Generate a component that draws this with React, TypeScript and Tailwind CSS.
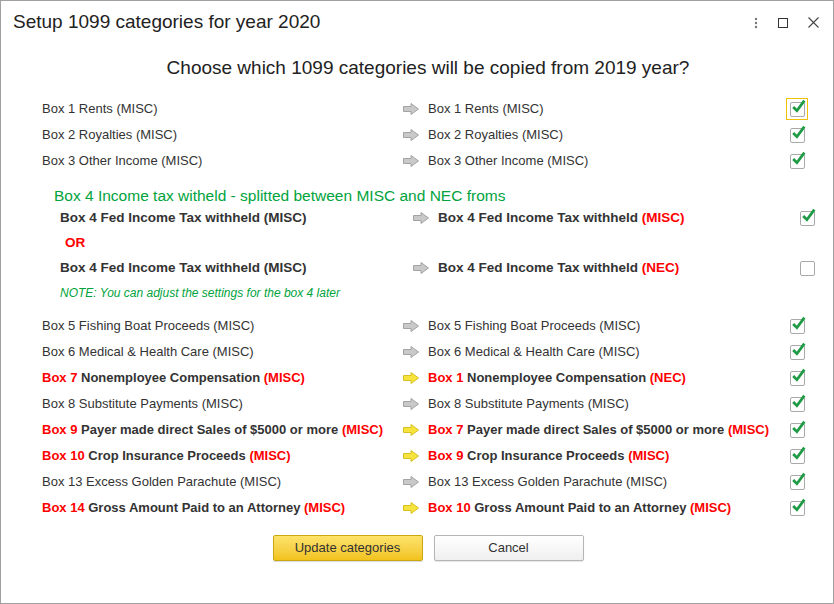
import React from "react";

type Part = { t: string; red?: boolean };
type Row = { left: Part[]; right: Part[]; bold?: boolean; yellow?: boolean; focus?: boolean };

const rowsTop: Row[] = [
  { left: [{ t: "Box 1 Rents (MISC)" }], right: [{ t: "Box 1 Rents (MISC)" }], focus: true },
  { left: [{ t: "Box 2 Royalties (MISC)" }], right: [{ t: "Box 2 Royalties (MISC)" }] },
  { left: [{ t: "Box 3 Other Income (MISC)" }], right: [{ t: "Box 3 Other Income (MISC)" }] },
];

const rowsBottom: Row[] = [
  { left: [{ t: "Box 5 Fishing Boat Proceeds (MISC)" }], right: [{ t: "Box 5 Fishing Boat Proceeds (MISC)" }] },
  { left: [{ t: "Box 6 Medical & Health Care (MISC)" }], right: [{ t: "Box 6 Medical & Health Care (MISC)" }] },
  {
    bold: true,
    yellow: true,
    left: [{ t: "Box 7", red: true }, { t: " Nonemployee Compensation " }, { t: "(MISC)", red: true }],
    right: [{ t: "Box 1", red: true }, { t: " Nonemployee Compensation " }, { t: "(NEC)", red: true }],
  },
  { left: [{ t: "Box 8 Substitute Payments (MISC)" }], right: [{ t: "Box 8 Substitute Payments (MISC)" }] },
  {
    bold: true,
    yellow: true,
    left: [{ t: "Box 9", red: true }, { t: " Payer made direct Sales of $5000 or more " }, { t: "(MISC)", red: true }],
    right: [{ t: "Box 7", red: true }, { t: " Payer made direct Sales of $5000 or more " }, { t: "(MISC)", red: true }],
  },
  {
    bold: true,
    yellow: true,
    left: [{ t: "Box 10", red: true }, { t: " Crop Insurance Proceeds " }, { t: "(MISC)", red: true }],
    right: [{ t: "Box 9", red: true }, { t: " Crop Insurance Proceeds " }, { t: "(MISC)", red: true }],
  },
  { left: [{ t: "Box 13 Excess Golden Parachute (MISC)" }], right: [{ t: "Box 13 Excess Golden Parachute (MISC)" }] },
  {
    bold: true,
    yellow: true,
    left: [{ t: "Box 14", red: true }, { t: " Gross Amount Paid to an Attorney " }, { t: "(MISC)", red: true }],
    right: [{ t: "Box 10", red: true }, { t: " Gross Amount Paid to an Attorney " }, { t: "(MISC)", red: true }],
  },
];

function Arrow({ yellow }: { yellow?: boolean }) {
  return (
    <svg width="18" height="14" viewBox="0 0 18 14">
      <path
        d="M1.5 4.5 H9 V1.5 L16.5 7 L9 12.5 V9.5 H1.5 Z"
        fill={yellow ? "#f6e33e" : "#c9c9c9"}
        stroke={yellow ? "#d8c020" : "#a3a3a3"}
        strokeWidth="1"
        strokeLinejoin="round"
      />
    </svg>
  );
}

function Check({ checked = true, focus }: { checked?: boolean; focus?: boolean }) {
  return (
    <div
      className={
        "flex h-[22px] w-[22px] items-center justify-center " +
        (focus ? "border border-[#f2c200]" : "border border-transparent")
      }
    >
      <div className="relative h-[15px] w-[15px] rounded-[2px] border border-[#a9a9a9] bg-white">
        {checked && (
          <svg className="absolute -left-[1px] -top-[5px]" width="17" height="17" viewBox="0 0 16 16">
            <path d="M3 8.5 L6.5 12 L13.5 2.5" fill="none" stroke="#1f9a45" strokeWidth="2.6" />
          </svg>
        )}
      </div>
    </div>
  );
}

function Text({ parts, bold, size = "text-[13px]" }: { parts: Part[]; bold?: boolean; size?: string }) {
  return (
    <span className={"whitespace-nowrap " + size + " " + (bold ? "font-bold" : "")}>
      {parts.map((p, i) => (
        <span key={i} className={p.red ? "text-[#ff0000]" : "text-[#333333]"}>
          {p.t}
        </span>
      ))}
    </span>
  );
}

function MapRow({ row }: { row: Row }) {
  return (
    <div className="grid h-[26px] grid-cols-[360px_26px_1fr_22px] items-center">
      <Text parts={row.left} bold={row.bold} />
      <Arrow yellow={row.yellow} />
      <Text parts={row.right} bold={row.bold} />
      <Check focus={row.focus} />
    </div>
  );
}

export default function App() {
  return (
    <div
      className="flex h-[604px] w-[834px] flex-col border border-[#a0a0a0] bg-white"
      style={{ fontFamily: '"Liberation Sans", Arial, sans-serif' }}
    >
      <div className="flex h-[43px] items-center justify-between pl-[12px] pr-[14px]">
        <span className="text-[19px] text-[#222]">Setup 1099 categories for year 2020</span>
        <div className="flex items-center gap-[20px] text-[#444]">
          <svg width="4" height="12" viewBox="0 0 4 12">
            <circle cx="2" cy="2" r="1.2" fill="#777" />
            <circle cx="2" cy="6" r="1.2" fill="#777" />
            <circle cx="2" cy="10" r="1.2" fill="#777" />
          </svg>
          <svg width="10" height="10" viewBox="0 0 10 10">
            <rect x="0.5" y="0.5" width="9" height="9" fill="none" stroke="#333" strokeWidth="1" />
          </svg>
          <svg width="11" height="11" viewBox="0 0 11 11">
            <path d="M0.5 0.5 L10.5 10.5 M10.5 0.5 L0.5 10.5" stroke="#444" strokeWidth="1.1" />
          </svg>
        </div>
      </div>

      <div className="mt-[12px] pl-[22px] text-center text-[19px] leading-[24px] text-[#222]">
        Choose which 1099 categories will be copied from 2019 year?
      </div>

      <div className="mt-[16px] flex flex-col pl-[41px] pr-[25px]">
        {rowsTop.map((r, i) => (
          <MapRow key={i} row={r} />
        ))}
      </div>

      <div className="mt-[12px] pl-[53px] text-[15.5px] leading-[20px] text-[#00a33c]">
        Box 4 Income tax witheld - splitted between MISC and NEC froms
      </div>

      <div className="flex flex-col pl-[59px] pr-[15px]">
        <div className="grid h-[24px] grid-cols-[352px_26px_1fr_22px] items-center">
          <Text parts={[{ t: "Box 4 Fed Income Tax withheld (MISC)" }]} bold size="text-[13.5px]" />
          <Arrow />
          <Text
            parts={[{ t: "Box 4 Fed Income Tax withheld " }, { t: "(MISC)", red: true }]}
            bold
            size="text-[13.5px]"
          />
          <Check />
        </div>
        <div className="flex h-[26px] items-center pl-[5px] text-[13.5px] font-bold text-[#ff0000]">OR</div>
        <div className="grid h-[24px] grid-cols-[352px_26px_1fr_22px] items-center">
          <Text parts={[{ t: "Box 4 Fed Income Tax withheld (MISC)" }]} bold size="text-[13.5px]" />
          <Arrow />
          <Text
            parts={[{ t: "Box 4 Fed Income Tax withheld " }, { t: "(NEC)", red: true }]}
            bold
            size="text-[13.5px]"
          />
          <Check checked={false} />
        </div>
      </div>

      <div className="mt-[5px] pl-[59px] text-[12px] italic leading-[16px] text-[#00a33c]">
        NOTE: You can adjust the settings for the box 4 later
      </div>

      <div className="mt-[12px] flex flex-col pl-[41px] pr-[25px]">
        {rowsBottom.map((r, i) => (
          <MapRow key={i} row={r} />
        ))}
      </div>

      <div className="mt-[14px] flex justify-center gap-[11px] pl-[22px]">
        <button className="h-[26px] w-[150px] rounded-[2px] border border-[#c9a814] bg-gradient-to-b from-[#fde36a] to-[#f2c318] text-[13px] text-[#333] shadow-[0_1px_1px_rgba(0,0,0,0.15)]">
          Update categories
        </button>
        <button className="h-[26px] w-[150px] rounded-[2px] border border-[#b5b5b5] bg-gradient-to-b from-white to-[#efefef] text-[13px] text-[#333] shadow-[0_1px_1px_rgba(0,0,0,0.1)]">
          Cancel
        </button>
      </div>
    </div>
  );
}
